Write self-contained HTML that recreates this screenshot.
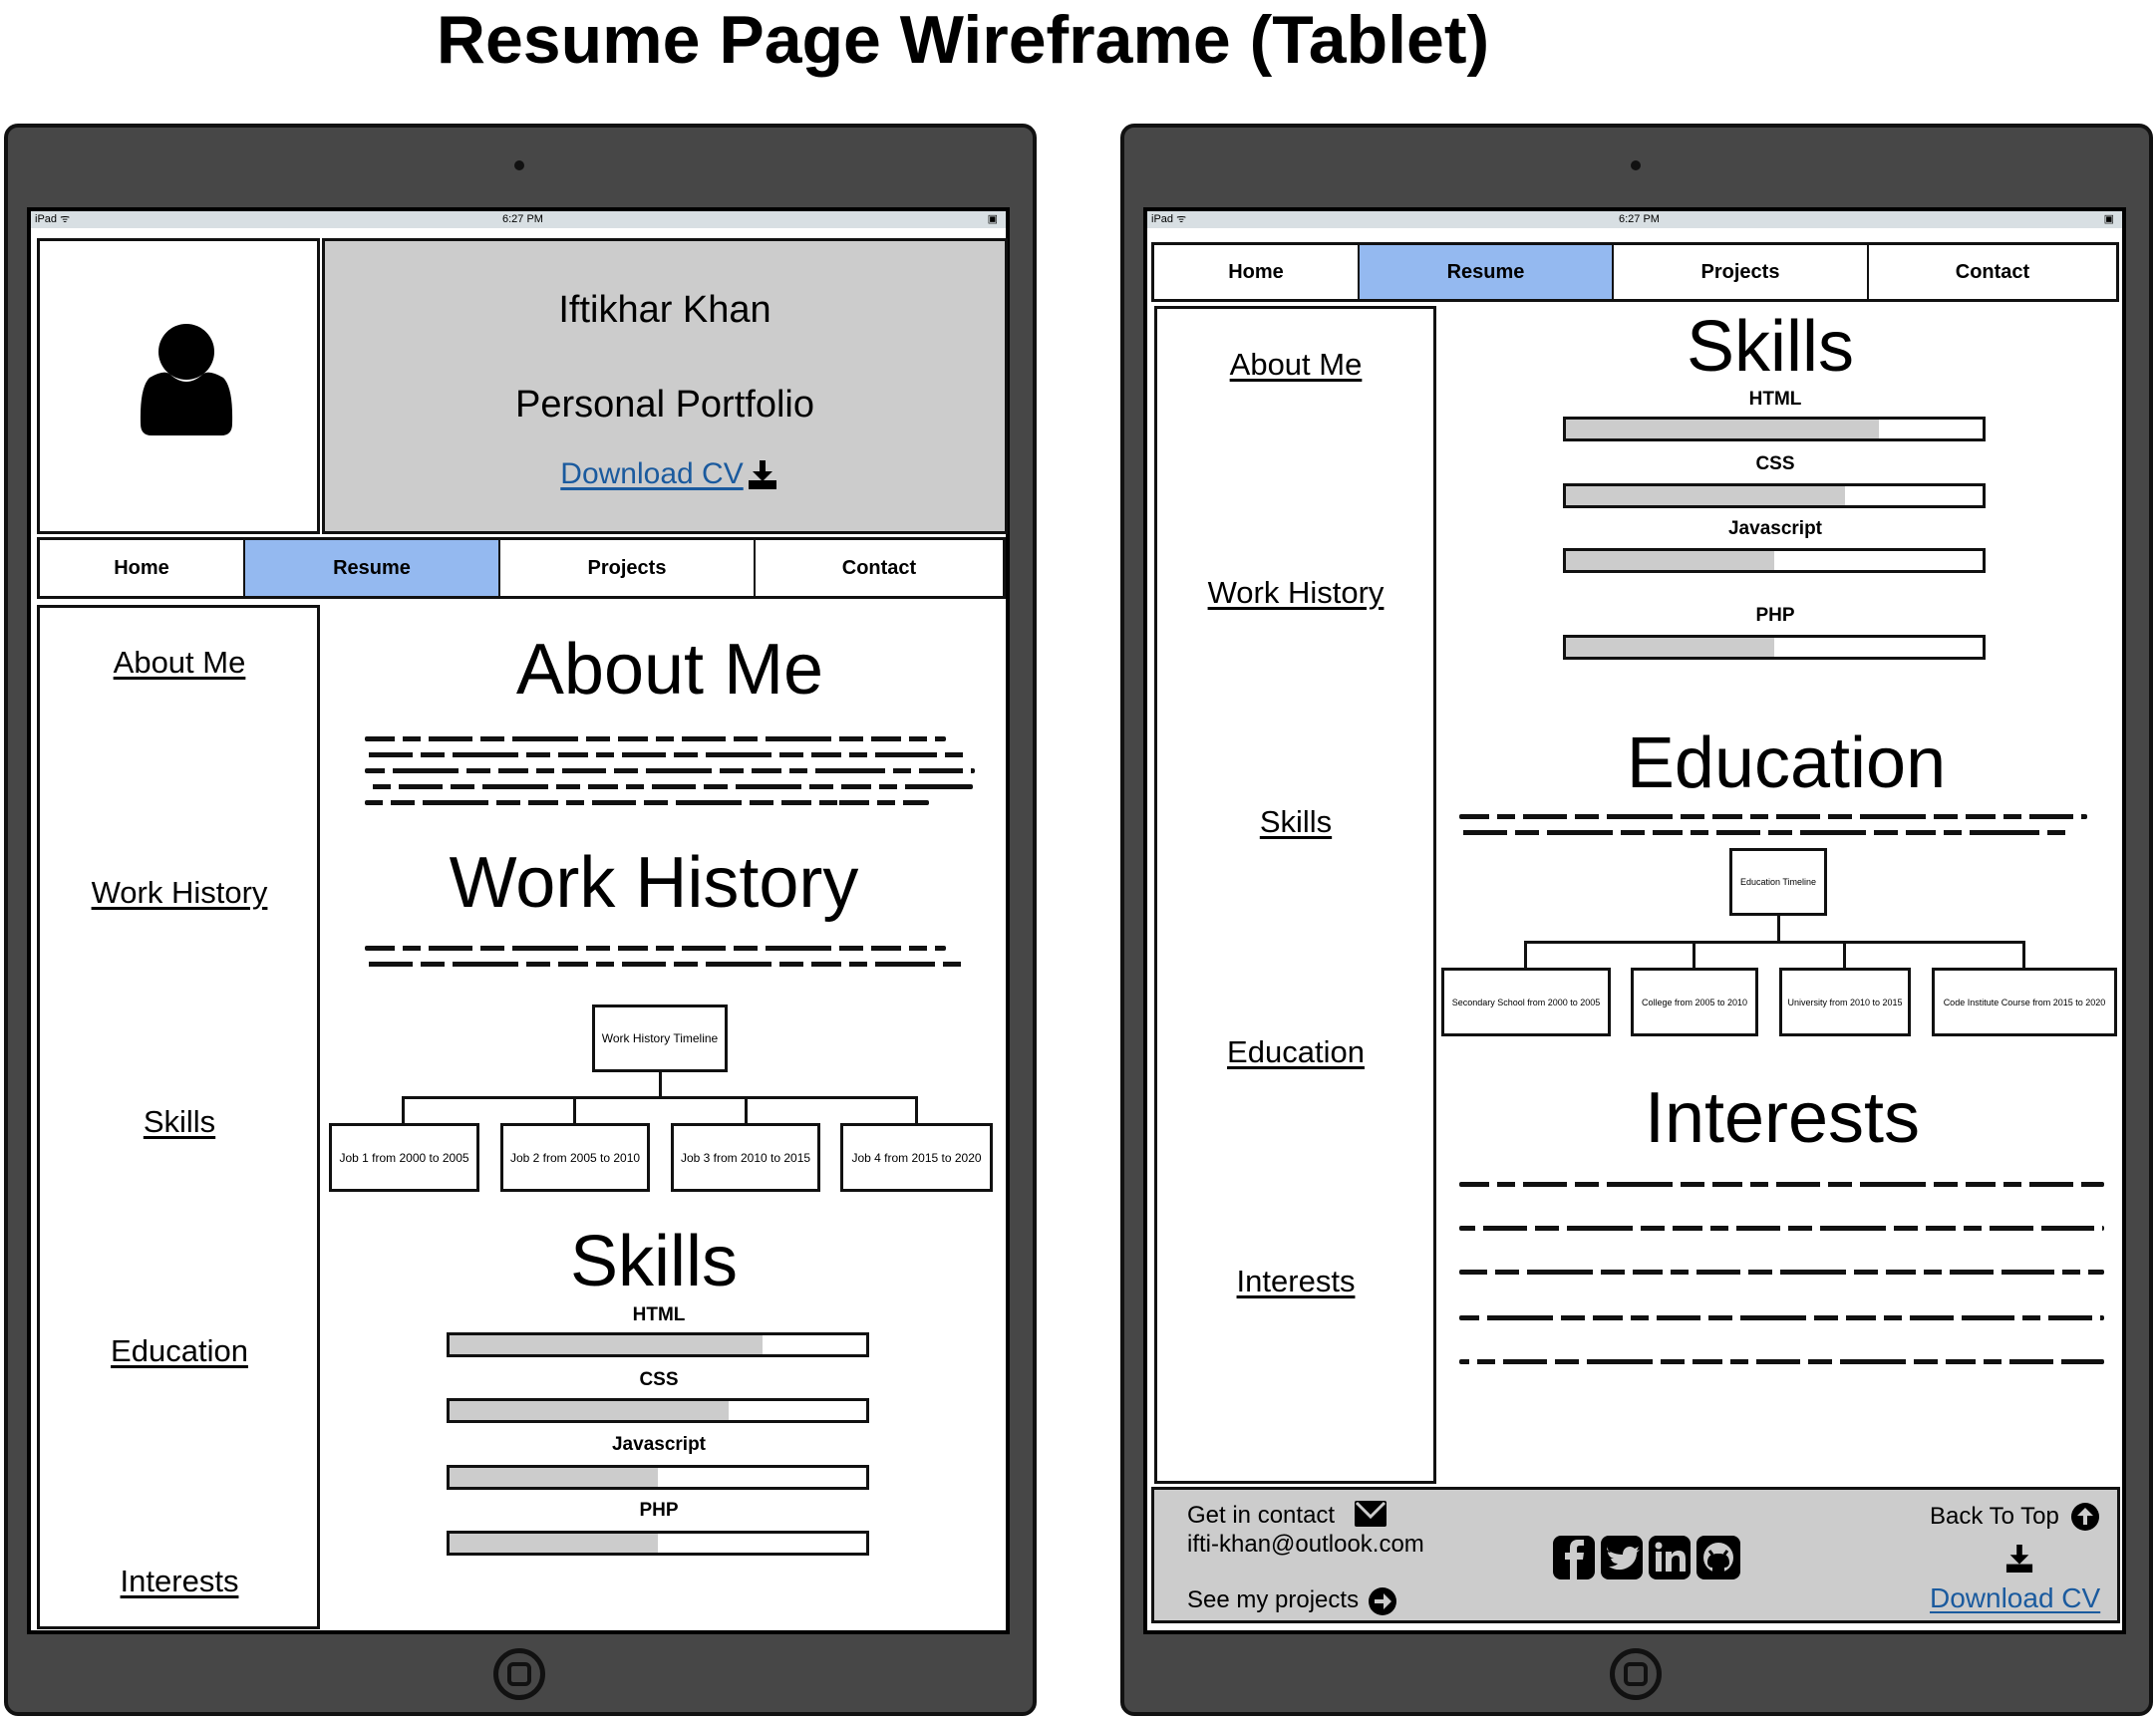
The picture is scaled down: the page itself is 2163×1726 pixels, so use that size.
<!DOCTYPE html>
<html><head><meta charset="utf-8"><style>
*{margin:0;padding:0;box-sizing:border-box}
body{width:2163px;height:1726px;background:#fff;position:relative;overflow:hidden;font-family:"Liberation Sans",sans-serif;color:#000}
.a{position:absolute}
.tab{position:absolute;background:#474747;border:4px solid #111;border-radius:14px}
.scr{position:absolute;background:#fff;border:4px solid #000}
.sb{position:absolute;background:#d8dfe3;height:17px;font-size:11px;line-height:17px}
.bx{position:absolute;border:3px solid #111;background:#fff}
.nav{position:absolute;border:3px solid #111;display:flex;background:#fff}
.nav div{border-right:2px solid #111;display:flex;align-items:center;justify-content:center;font-weight:bold;font-size:20px}
.nav div:last-child{border-right:none}
.lnk{position:absolute;font-size:31px;text-decoration:underline;text-underline-offset:4px;text-align:center;transform:translateX(-50%);white-space:nowrap}
.h{position:absolute;transform:translateX(-50%);white-space:nowrap;line-height:1}
.sc{position:absolute;height:5px;border-radius:2px;background:repeating-linear-gradient(90deg,#111 0 30px,transparent 30px 38px,#111 38px 56px,transparent 56px 64px,#111 64px 108px,transparent 108px 116px,#111 116px 140px,transparent 140px 148px,#111 148px 214px,transparent 214px 222px,#111 222px 246px,transparent 246px 254px)}
.lab{position:absolute;font-weight:bold;font-size:19px;transform:translateX(-50%)}
.bar{position:absolute;border:3px solid #111;height:25px;background:#fff}
.bar i{display:block;height:100%;background:#ccc}
.tl{position:absolute;border:3px solid #111;background:#fff;font-size:12px;display:flex;align-items:center;justify-content:center;text-align:center;white-space:nowrap}
.ln{position:absolute;background:#111}
.btn{position:absolute;width:52px;height:52px;border:5px solid #111;border-radius:50%}
.btn::after{content:"";position:absolute;box-sizing:border-box;left:9px;top:9px;width:24px;height:24px;border:4px solid #111;border-radius:6px}
.dot{position:absolute;width:10px;height:10px;background:#111;border-radius:50%}
</style></head><body>
<div class="h" style="left:966px;top:6px;font-size:68px;font-weight:bold">Resume Page Wireframe (Tablet)</div>

<!-- LEFT TABLET -->
<div class="tab" style="left:4px;top:124px;width:1036px;height:1598px"></div>
<div class="dot" style="left:516px;top:161px"></div>
<div class="btn" style="left:495px;top:1654px"></div>
<div class="scr" style="left:27px;top:208px;width:986px;height:1432px"></div>
<div class="sb" style="left:31px;top:212px;width:978px"><span style="position:absolute;left:4px">iPad ᯤ</span><span style="position:absolute;left:473px">6:27 PM</span><span style="position:absolute;right:8px">▣</span></div>
<div class="bx" style="left:37px;top:239px;width:284px;height:297px"></div>
<svg class="a" style="left:140px;top:325px" width="94" height="114" viewBox="0 0 94 114"><ellipse cx="47" cy="28" rx="28" ry="28"/><path d="M10 54 Q24 46 30 50 Q47 66 64 50 Q70 46 84 54 Q94 64 93 100 Q93 112 82 112 L12 112 Q1 112 1 100 Q0 64 10 54Z"/></svg>
<div class="bx" style="left:323px;top:239px;width:688px;height:297px;background:#ccc"></div>
<div class="h" style="left:667px;top:292px;font-size:38px">Iftikhar Khan</div>
<div class="h" style="left:667px;top:387px;font-size:38px">Personal Portfolio</div>
<div class="h" style="left:654px;top:461px;font-size:30px;color:#1a5a9e;text-decoration:underline;text-underline-offset:4px">Download CV</div>
<svg class="a" style="left:750px;top:462px" width="30" height="30" viewBox="0 0 30 30"><rect x="12" y="0" width="6" height="12"/><path d="M5 11 L25 11 L15 21Z"/><rect x="1" y="20" width="28" height="9"/></svg>
<div class="nav" style="left:37px;top:539px;width:972px;height:62px">
<div style="width:206px">Home</div><div style="width:256px;background:#94b9f0">Resume</div><div style="width:256px">Projects</div><div style="flex:1">Contact</div></div>
<div class="bx" style="left:37px;top:607px;width:284px;height:1028px"></div>
<div class="lnk" style="left:180px;top:647px">About Me</div>
<div class="lnk" style="left:180px;top:878px">Work History</div>
<div class="lnk" style="left:180px;top:1108px">Skills</div>
<div class="lnk" style="left:180px;top:1338px">Education</div>
<div class="lnk" style="left:180px;top:1569px">Interests</div>

<div class="h" style="left:672px;top:636px;font-size:72px">About Me</div>
<div class="sc" style="left:366px;top:739px;width:583px"></div>
<div class="sc" style="left:366px;top:755px;width:604px;background-position:-60px 0"></div>
<div class="sc" style="left:366px;top:771px;width:612px;background-position:-120px 0"></div>
<div class="sc" style="left:366px;top:787px;width:610px;background-position:-30px 0"></div>
<div class="sc" style="left:366px;top:803px;width:566px;background-position:-90px 0"></div>
<div class="h" style="left:656px;top:850px;font-size:72px">Work History</div>
<div class="sc" style="left:366px;top:949px;width:583px"></div>
<div class="sc" style="left:366px;top:965px;width:602px;background-position:-60px 0"></div>
<div class="tl" style="left:594px;top:1008px;width:136px;height:68px">Work History Timeline</div>
<div class="ln" style="left:661px;top:1076px;width:3px;height:26px"></div>
<div class="ln" style="left:403px;top:1100px;width:518px;height:3px"></div>
<div class="ln" style="left:403px;top:1100px;width:3px;height:28px"></div>
<div class="ln" style="left:575px;top:1100px;width:3px;height:28px"></div>
<div class="ln" style="left:747px;top:1100px;width:3px;height:28px"></div>
<div class="ln" style="left:918px;top:1100px;width:3px;height:28px"></div>
<div class="tl" style="left:330px;top:1127px;width:151px;height:69px">Job 1 from 2000 to 2005</div>
<div class="tl" style="left:502px;top:1127px;width:150px;height:69px">Job 2 from 2005 to 2010</div>
<div class="tl" style="left:673px;top:1127px;width:150px;height:69px">Job 3 from 2010 to 2015</div>
<div class="tl" style="left:843px;top:1127px;width:153px;height:69px">Job 4 from 2015 to 2020</div>
<div class="h" style="left:656px;top:1230px;font-size:72px">Skills</div>
<div class="lab" style="left:661px;top:1309px">HTML</div>
<div class="bar" style="left:448px;top:1337px;width:424px"><i style="width:75%"></i></div>
<div class="lab" style="left:661px;top:1374px">CSS</div>
<div class="bar" style="left:448px;top:1403px;width:424px"><i style="width:67%"></i></div>
<div class="lab" style="left:661px;top:1439px">Javascript</div>
<div class="bar" style="left:448px;top:1470px;width:424px"><i style="width:50%"></i></div>
<div class="lab" style="left:661px;top:1505px">PHP</div>
<div class="bar" style="left:448px;top:1536px;width:424px"><i style="width:50%"></i></div>

<!-- RIGHT TABLET -->
<div class="tab" style="left:1124px;top:124px;width:1036px;height:1598px"></div>
<div class="dot" style="left:1636px;top:161px"></div>
<div class="btn" style="left:1615px;top:1654px"></div>
<div class="scr" style="left:1147px;top:208px;width:986px;height:1432px"></div>
<div class="sb" style="left:1151px;top:212px;width:978px"><span style="position:absolute;left:4px">iPad ᯤ</span><span style="position:absolute;left:473px">6:27 PM</span><span style="position:absolute;right:8px">▣</span></div>
<div class="nav" style="left:1155px;top:243px;width:971px;height:60px">
<div style="width:206px">Home</div><div style="width:255px;background:#94b9f0">Resume</div><div style="width:256px">Projects</div><div style="flex:1">Contact</div></div>
<div class="bx" style="left:1158px;top:307px;width:283px;height:1182px"></div>
<div class="lnk" style="left:1300px;top:348px">About Me</div>
<div class="lnk" style="left:1300px;top:577px">Work History</div>
<div class="lnk" style="left:1300px;top:807px">Skills</div>
<div class="lnk" style="left:1300px;top:1038px">Education</div>
<div class="lnk" style="left:1300px;top:1268px">Interests</div>

<div class="h" style="left:1776px;top:312px;font-size:72px">Skills</div>
<div class="lab" style="left:1781px;top:390px">HTML</div>
<div class="bar" style="left:1568px;top:418px;width:424px"><i style="width:75%"></i></div>
<div class="lab" style="left:1781px;top:455px">CSS</div>
<div class="bar" style="left:1568px;top:485px;width:424px"><i style="width:67%"></i></div>
<div class="lab" style="left:1781px;top:520px">Javascript</div>
<div class="bar" style="left:1568px;top:550px;width:424px"><i style="width:50%"></i></div>
<div class="lab" style="left:1781px;top:607px">PHP</div>
<div class="bar" style="left:1568px;top:637px;width:424px"><i style="width:50%"></i></div>
<div class="h" style="left:1792px;top:730px;font-size:72px">Education</div>
<div class="sc" style="left:1464px;top:817px;width:630px"></div>
<div class="sc" style="left:1464px;top:833px;width:612px;background-position:-60px 0"></div>
<div class="tl" style="left:1735px;top:851px;width:98px;height:68px;font-size:9px">Education Timeline</div>
<div class="ln" style="left:1783px;top:919px;width:3px;height:27px"></div>
<div class="ln" style="left:1529px;top:944px;width:503px;height:3px"></div>
<div class="ln" style="left:1529px;top:944px;width:3px;height:28px"></div>
<div class="ln" style="left:1698px;top:944px;width:3px;height:28px"></div>
<div class="ln" style="left:1849px;top:944px;width:3px;height:28px"></div>
<div class="ln" style="left:2029px;top:944px;width:3px;height:28px"></div>
<div class="tl" style="left:1446px;top:971px;width:170px;height:69px;font-size:9px">Secondary School from 2000 to 2005</div>
<div class="tl" style="left:1636px;top:971px;width:128px;height:69px;font-size:9px">College from 2005 to 2010</div>
<div class="tl" style="left:1785px;top:971px;width:132px;height:69px;font-size:9px">University from 2010 to 2015</div>
<div class="tl" style="left:1938px;top:971px;width:186px;height:69px;font-size:9px">Code Institute Course from 2015 to 2020</div>
<div class="h" style="left:1788px;top:1086px;font-size:72px">Interests</div>
<div class="sc" style="left:1464px;top:1186px;width:647px"></div>
<div class="sc" style="left:1464px;top:1230px;width:647px;background-position:-40px 0"></div>
<div class="sc" style="left:1464px;top:1274px;width:647px;background-position:-80px 0"></div>
<div class="sc" style="left:1464px;top:1320px;width:647px;background-position:-120px 0"></div>
<div class="sc" style="left:1464px;top:1364px;width:647px;background-position:-20px 0"></div>

<div class="bx" style="left:1155px;top:1492px;width:972px;height:137px;background:#ccc"></div>
<div class="a" style="left:1191px;top:1507px;font-size:24px">Get in contact</div>
<svg class="a" style="left:1359px;top:1506px" width="32" height="26" viewBox="0 0 32 26"><rect x="0" y="0" width="32" height="26" rx="2"/><path d="M2 2 L16 16 L30 2" stroke="#ccc" stroke-width="3" fill="none"/></svg>
<div class="a" style="left:1191px;top:1536px;font-size:24px">ifti-khan@outlook.com</div>
<div class="a" style="left:1191px;top:1592px;font-size:24px">See my projects</div>
<svg class="a" style="left:1372px;top:1592px" width="30" height="30" viewBox="0 0 30 30"><circle cx="15" cy="15" r="14"/><path d="M7 13h9V7l8 8-8 8v-6H7z" fill="#ccc"/></svg>
<svg class="a" style="left:1558px;top:1541px" width="190" height="44" viewBox="0 0 190 44">
<rect x="0" y="0" width="42" height="44" rx="8"/><path d="M24 44V24h6l1-7h-7v-4c0-2 1-3 3-3h4V4h-6c-6 0-8 4-8 8v5h-5v7h5v20z" fill="#ccc"/>
<rect x="48" y="0" width="42" height="44" rx="8"/><path d="M54 14c4 3 10 5 16 5 0-8 8-10 12-6l4-2-2 4 3-1-3 3c0 14-16 22-28 14 4 0 7-1 9-3-4 0-6-2-7-5h3c-4-1-6-4-6-7 1 1 2 1 3 1-3-2-4-5-3-8z" fill="#ccc"/>
<rect x="96" y="0" width="42" height="44" rx="8"/><rect x="103" y="16" width="6" height="20" fill="#ccc"/><circle cx="106" cy="10" r="3.5" fill="#ccc"/><path d="M113 16h6v3c2-3 4-4 7-4 5 0 7 3 7 8v13h-6V24c0-3-1-4-3-4s-5 1-5 5v11h-6z" fill="#ccc"/>
<rect x="144" y="0" width="44" height="44" rx="8"/><circle cx="166" cy="22" r="15" fill="#ccc"/><path d="M160 38v-6c-3 0-5-2-5-5 0-6 3-9 11-9s11 3 11 9c0 3-2 5-5 5v6z"/><path d="M157 15l3 4M175 15l-3 4" stroke="#000" stroke-width="3"/>
</svg>
<div class="a" style="left:1936px;top:1508px;font-size:24px">Back To Top</div>
<svg class="a" style="left:2077px;top:1507px" width="30" height="30" viewBox="0 0 30 30"><circle cx="15" cy="15" r="14"/><path d="M13 23v-9H7l8-8 8 8h-6v9z" fill="#ccc"/></svg>
<svg class="a" style="left:2012px;top:1549px" width="28" height="30" viewBox="0 0 30 30"><rect x="12" y="0" width="6" height="12"/><path d="M5 11 L25 11 L15 21Z"/><rect x="1" y="21" width="28" height="9"/></svg>
<div class="a" style="left:1936px;top:1588px;font-size:28px;color:#1a5a9e;text-decoration:underline;text-underline-offset:4px">Download CV</div>
</body></html>
